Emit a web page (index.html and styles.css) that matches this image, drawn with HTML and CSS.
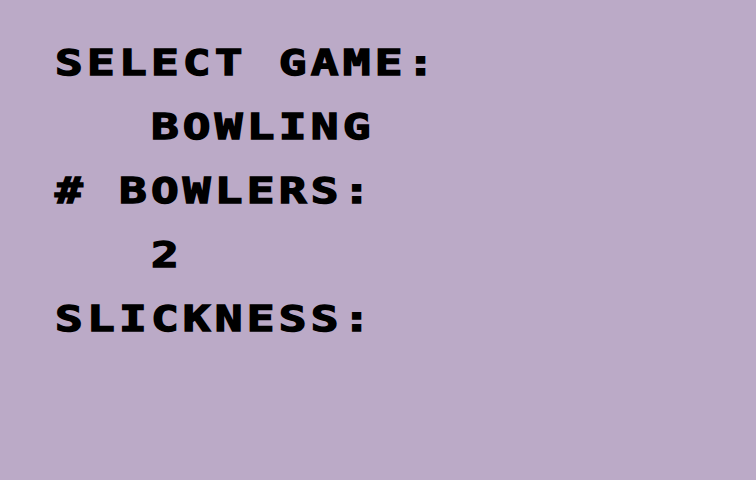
FILE: index.html
```html
<!DOCTYPE html>
<html lang="en">

<head>
    <meta charset="UTF-8">
    <meta name="viewport" content="width=device-width, initial-scale=1.0">
    <title>game select</title>
    <link rel="stylesheet" href="styles.css">
</head>

<body>
    <div class="screen">
        <div class="menu">
            <div class="line">SELECT GAME:</div>
            <div class="line">   BOWLING</div>
            <div class="line"># BOWLERS:</div>
            <div class="line">   2</div>
            <div class="line">SLICKNESS:</div>
        </div>
    </div>
</body>

</html>
```

FILE: styles.css
```css
* {
    margin: 0px;
    padding: 0px;
    box-sizing: border-box;
}

body {
    background-color: #bbaac7;
    font-family: "DejaVu Sans Mono", "Liberation Mono", monospace;
}

.screen {
    width: 756px;
    height: 480px;
    overflow: hidden;
    padding: 31px 0px 0px 55px;
}

/* chunky block letters, stretched to an 8-wide cell */
.menu .line {
    height: 64px;
    line-height: 64px;
    font-size: 36px;
    font-weight: bold;
    color: #000000;
    -webkit-text-stroke: 1.4px #000000;
    letter-spacing: 3.3px;
    white-space: pre;
    transform: scaleX(1.28);
    transform-origin: left center;
}
```
